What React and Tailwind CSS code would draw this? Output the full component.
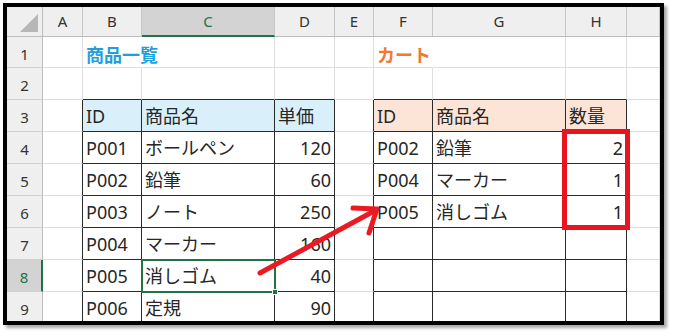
import React from "react";
import clsx from "clsx";

const COLS = ["", "A", "B", "C", "D", "E", "F", "G", "H", ""];

// row index -> cells by column index (1 = A ... 9 = I)
const DATA = {
    1: { 2: "商品一覧", 6: "カート" },
    3: { 2: "ID", 3: "商品名", 4: "単価", 6: "ID", 7: "商品名", 8: "数量" },
    4: { 2: "P001", 3: "ボールペン", 4: "120", 6: "P002", 7: "鉛筆", 8: "2" },
    5: { 2: "P002", 3: "鉛筆", 4: "60", 6: "P004", 7: "マーカー", 8: "1" },
    6: { 2: "P003", 3: "ノート", 4: "250", 6: "P005", 7: "消しゴム", 8: "1" },
    7: { 2: "P004", 3: "マーカー", 4: "160" },
    8: { 2: "P005", 3: "消しゴム", 4: "40" },
    9: { 2: "P006", 3: "定規", 4: "90" },
};

const inTable = (r, c) => r >= 3 && r <= 9 && ((c >= 2 && c <= 4) || (c >= 6 && c <= 8));

const HeaderCell = ({ label, selected }) => (
    <div
        className={clsx(
            "flex items-start justify-center pt-[3px] text-[15px] border-r border-r-[#c6c6c6]",
            selected
                ? "bg-[#d3d3d3] border-b-2 border-b-[#217346] text-[#217346]"
                : "bg-[#efefef] border-b border-b-[#bdbdbd] text-[#333]"
        )}
    >
        {label}
    </div>
);

const RowHeader = ({ n, selected }) => (
    <div
        className={clsx(
            "flex items-center justify-center pt-[4px] text-[15px] border-b border-b-[#d0d0d0]",
            selected
                ? "bg-[#d3d3d3] border-r-2 border-r-[#217346] text-[#217346]"
                : "bg-[#efefef] border-r border-r-[#bdbdbd] text-[#333]"
        )}
    >
        {n}
    </div>
);

const Cell = ({ r, c }) => {
    const value = DATA[r]?.[c];
    const rightDark = inTable(r, c) || inTable(r, c + 1);
    const bottomDark = inTable(r, c) || inTable(r + 1, c);
    const isNumber = r >= 4 && (c === 4 || c === 8);
    const title = r === 1 && value;

    return (
        <div
            className={clsx(
                "flex items-center whitespace-nowrap border-r border-b overflow-visible",
                rightDark ? "border-r-[#2a2a2a]" : r === 1 && (c === 2 || c === 6) ? "border-r-white" : "border-r-[#dedede]",
                bottomDark ? "border-b-[#2a2a2a]" : "border-b-[#dedede]",
                r === 3 && c >= 2 && c <= 4 && "bg-[#d9f0fb]",
                r === 3 && c >= 6 && c <= 8 && "bg-[#fce4d6]",
                isNumber ? "justify-end pr-[3px]" : "pl-[3px]",
                title ? "pt-[6px] text-[18px] font-bold" : "pt-[2px] text-[18px] text-[#262626]",
                title && c === 2 && "text-[#1fa0dc]",
                title && c === 6 && "text-[#f2782f]"
            )}
        >
            {value}
        </div>
    );
};

const Corner = () => (
    <div className="flex items-end justify-end p-[4px] bg-[#efefef] border-r border-b border-[#bdbdbd]">
        <svg width="18" height="18" viewBox="0 0 18 18">
            <polygon points="18,0 18,18 0,18" fill="#b7b7b7" />
        </svg>
    </div>
);

const Sheet = () => {
    const cells = [];
    for (let r = 0; r <= 9; r++) {
        for (let c = 0; c <= 9; c++) {
            const key = `${r}-${c}`;
            if (r === 0 && c === 0) cells.push(<Corner key={key} />);
            else if (r === 0) cells.push(<HeaderCell key={key} label={COLS[c]} selected={c === 3} />);
            else if (c === 0) cells.push(<RowHeader key={key} n={r} selected={r === 8} />);
            else cells.push(<Cell key={key} r={r} c={c} />);
        }
    }
    return (
        <div className="relative w-[653px] h-[314px] overflow-hidden bg-white">
            <div className="grid grid-cols-[36px_40px_59px_133px_60px_39px_59px_133px_61px_33px] grid-rows-[30px_31px_32px_32px_32px_32px_32px_32px_32px_32px]">
                {cells}
            </div>

            {/* selected cell C8 */}
            <div className="absolute left-[134px] top-[252px] w-[135px] h-[34px] border-2 border-[#217346] pointer-events-none" />
            <div className="absolute left-[265px] top-[282px] w-[6px] h-[6px] bg-[#217346] border border-white" />

            {/* red highlight box */}
            <div className="absolute left-[555px] top-[122px] w-[68px] h-[101px] border-[5px] border-[#e8141f]" />

            {/* arrow */}
            <svg className="absolute inset-0 pointer-events-none" width="653" height="314" viewBox="0 0 653 314">
                <g stroke="#ea1a24" strokeWidth="5" strokeLinecap="round" strokeLinejoin="round" fill="none">
                    <line x1="253" y1="266" x2="369" y2="203" />
                    <polyline points="346,201 370,202 362,226" />
                </g>
            </svg>
        </div>
    );
};

export default function App() {
    return (
        <div className="w-[673px] h-[336px] bg-white p-[3px] font-['Noto_Sans','Noto_Sans_CJK_JP',sans-serif]">
            <div className="w-fit border-4 border-black shadow-[3px_3px_3px_rgba(0,0,0,0.35)]">
                <Sheet />
            </div>
        </div>
    );
}
